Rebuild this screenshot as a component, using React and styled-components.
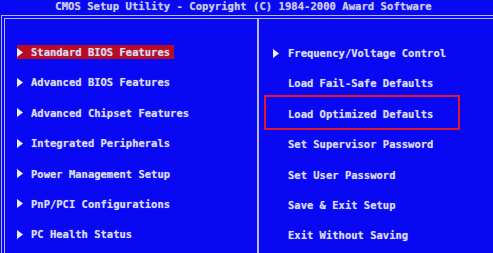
import React from 'react'
import styled, { createGlobalStyle } from 'styled-components'

const BLUE = '#0808f2'
const TEXT = '#dadcf2'
const LINE = '#b4b8ea'

const GlobalStyle = createGlobalStyle`
  html, body {
    margin: 0;
    padding: 0;
    background: ${BLUE};
    overflow: hidden;
  }
`

const Screen = styled.div`
  width: 493px;
  height: 253px;
  overflow: hidden;
  background: ${BLUE};
  font-family: "DejaVu Sans Mono", "Liberation Mono", monospace;
  font-weight: bold;
  color: ${TEXT};
  text-shadow: 0 0 1px rgba(220, 224, 255, 0.55);
`

const Title = styled.div`
  height: 15px;
  line-height: 13px;
  font-size: 10.6px;
  text-align: center;
  padding-right: 6px;
  color: #c8cef0;
  white-space: pre;
`

const Frame = styled.div`
  display: grid;
  grid-template-columns: 252px 1fr;
  width: 540px;
  height: 260px;
  margin-left: 1px;
  border-top: 4px double ${LINE};
  border-left: 4px double ${LINE};
`

const Menu = styled.div`
  display: flex;
  flex-direction: column;
  align-items: flex-start;
  gap: 16.4px;
  padding-top: ${p => p.$top}px;
  padding-left: ${p => p.$left}px;
  border-left: ${p => (p.$divider ? `2px solid ${LINE}` : 'none')};
`

const Item = styled.div`
  position: relative;
  display: flex;
  align-items: center;
  gap: ${p => p.$gap}px;
  height: 14px;
  padding-right: 4px;
  font-size: 10.5px;
  white-space: pre;
  background: ${p => (p.$active ? '#b80c22' : 'transparent')};

  ${p =>
    p.$marked &&
    `
    &::after {
      content: '';
      position: absolute;
      top: -12px;
      bottom: -9px;
      left: -9px;
      width: 192px;
      border: 2px solid #e0182e;
    }
  `}
`

const Arrow = ({ show }) => (
  <svg width="6" height="9" viewBox="0 0 6 9" style={{ visibility: show ? 'visible' : 'hidden' }}>
    <polygon points="0,0 6,4.5 0,9" fill="#eef0ff" />
  </svg>
)

const left = [
  'Standard BIOS Features',
  'Advanced BIOS Features',
  'Advanced Chipset Features',
  'Integrated Peripherals',
  'Power Management Setup',
  'PnP/PCI Configurations',
  'PC Health Status',
]

const right = [
  { label: 'Frequency/Voltage Control', arrow: true },
  { label: 'Load Fail-Safe Defaults' },
  { label: 'Load Optimized Defaults', marked: true },
  { label: 'Set Supervisor Password' },
  { label: 'Set User Password' },
  { label: 'Save & Exit Setup' },
  { label: 'Exit Without Saving' },
]

export default function App() {
  return (
    <Screen>
      <GlobalStyle />
      <Title>CMOS Setup Utility - Copyright (C) 1984-2000 Award Software</Title>
      <Frame>
        <Menu $top={26} $left={12}>
          {left.map((label, i) => (
            <Item key={label} $gap={8} $active={i === 0}>
              <Arrow show />
              {label}
            </Item>
          ))}
        </Menu>
        <Menu $top={27} $left={14} $divider>
          {right.map(item => (
            <Item key={item.label} $gap={9} $marked={item.marked}>
              <Arrow show={item.arrow} />
              {item.label}
            </Item>
          ))}
        </Menu>
      </Frame>
    </Screen>
  )
}
